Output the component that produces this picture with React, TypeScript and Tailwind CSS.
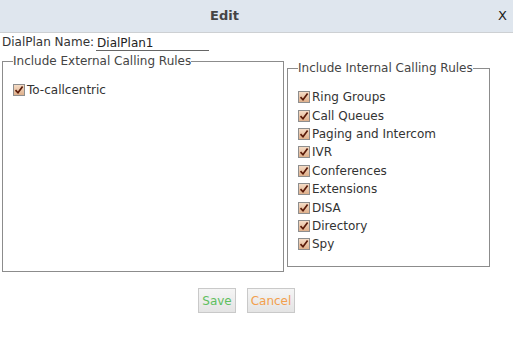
import React from "react";

function Check() {
  return (
    <span className="inline-flex w-[12px] h-[12px] shrink-0 border border-[#8e8e8e] bg-gradient-to-b from-[#f5dcc6] to-[#deb08c] items-center justify-center">
      <svg width="10" height="10" viewBox="0 0 10 10">
        <path d="M1.5 5.2 L4 7.8 L8.6 1.6" fill="none" stroke="#5a1a08" strokeWidth="1.7" />
      </svg>
    </span>
  );
}

function Item({ label }: { label: string }) {
  return (
    <div className="flex items-center h-[18.4px] gap-[2px]">
      <Check />
      <span>{label}</span>
    </div>
  );
}

const internal = [
  "Ring Groups",
  "Call Queues",
  "Paging and Intercom",
  "IVR",
  "Conferences",
  "Extensions",
  "DISA",
  "Directory",
  "Spy",
];

export default function App() {
  return (
    <div className="w-[513px] h-[362px] bg-white font-['DejaVu_Sans',sans-serif] text-[12px] text-[#333] leading-[18px]">
      <div className="h-[33px] flex items-center bg-[#dfe6ee] border-b border-[#cdd0d3]">
        <div className="flex-1 text-center font-bold text-[#444] text-[13px]">Edit</div>
        <div className="w-[64px] text-right pr-[6px] text-[#222] text-[13px]">X</div>
      </div>
      <div className="flex items-center h-[18px] pl-[2px]">
        <span>DialPlan Name:</span>
        <div className="ml-[2px] w-[113px] h-[17px] border-b border-[#666] pl-[1px] text-[#222]">DialPlan1</div>
      </div>
      <div className="flex items-start mt-[1px]">
        <fieldset className="ml-[2px] w-[282px] h-[220px] border border-[#8c8c8c] pl-[10px]">
          <legend className="px-0 text-[#444]">Include External Calling Rules</legend>
          <div className="mt-[11px]">
            <Item label="To-callcentric" />
          </div>
        </fieldset>
        <fieldset className="ml-[3px] mt-[7px] w-[203px] border border-[#8c8c8c] pl-[10px] pb-[12px]">
          <legend className="px-0 text-[#444]">Include Internal Calling Rules</legend>
          <div className="mt-[11px]">
            {internal.map((l) => (
              <Item key={l} label={l} />
            ))}
          </div>
        </fieldset>
      </div>
      <div className="flex pl-[198px] gap-[11px] mt-[16px]">
        <button className="h-[25px] w-[38px] border border-[#c9c9c9] bg-gradient-to-b from-[#f5f5f5] to-[#e4e4e4] text-[#5fbf5f] text-[12px]">
          Save
        </button>
        <button className="h-[25px] w-[48px] border border-[#c9c9c9] bg-gradient-to-b from-[#f5f5f5] to-[#e4e4e4] text-[#f2a04e] text-[12px]">
          Cancel
        </button>
      </div>
    </div>
  );
}
